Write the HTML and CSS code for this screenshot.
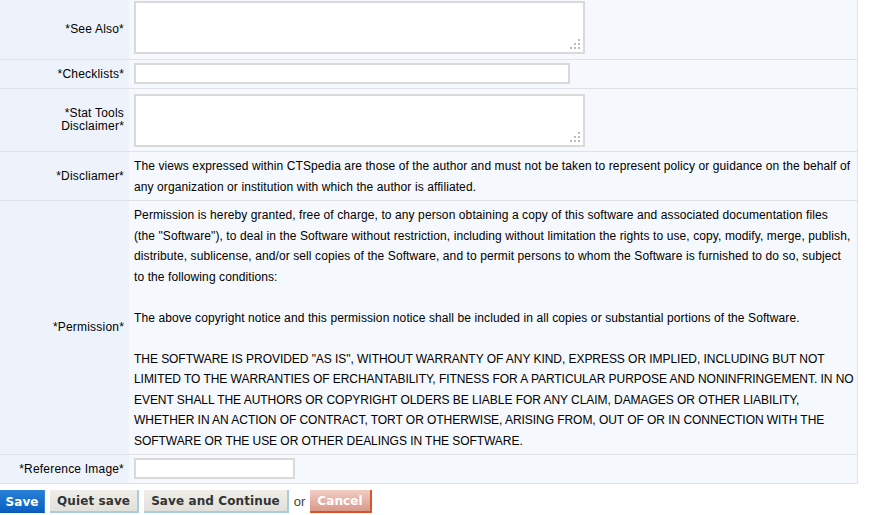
FILE: index.html
```html
<!DOCTYPE html>
<html>
<head>
<meta charset="utf-8">
<link rel="stylesheet" href="styles.css">
</head>
<body>
<table class="form">
  <tr class="row-first">
    <td class="label">*See Also*</td>
    <td class="value pad-area">
      <span class="area-wrap"><textarea class="area"></textarea><svg class="grip" width="10" height="10" viewBox="0 0 10 10"><rect x="8" y="0" width="2" height="2"/><rect x="4" y="4" width="2" height="2"/><rect x="8" y="4" width="2" height="2"/><rect x="0" y="8" width="2" height="2"/><rect x="4" y="8" width="2" height="2"/><rect x="8" y="8" width="2" height="2"/></svg></span>
    </td>
  </tr>
  <tr>
    <td class="label">*Checklists*</td>
    <td class="value pad-input"><input class="field field-wide" type="text"></td>
  </tr>
  <tr>
    <td class="label">*Stat Tools<br>Disclaimer*</td>
    <td class="value pad-area">
      <span class="area-wrap"><textarea class="area"></textarea><svg class="grip" width="10" height="10" viewBox="0 0 10 10"><rect x="8" y="0" width="2" height="2"/><rect x="4" y="4" width="2" height="2"/><rect x="8" y="4" width="2" height="2"/><rect x="0" y="8" width="2" height="2"/><rect x="4" y="8" width="2" height="2"/><rect x="8" y="8" width="2" height="2"/></svg></span>
    </td>
  </tr>
  <tr>
    <td class="label">*Discliamer*</td>
    <td class="value pad-text">The views expressed within CTSpedia are those of the author and must not be taken to represent policy or guidance on the behalf of<br>any organization or institution with which the author is affiliated.</td>
  </tr>
  <tr>
    <td class="label">*Permission*</td>
    <td class="value pad-text">Permission is hereby granted, free of charge, to any person obtaining a copy of this software and associated documentation files<br>(the "Software"), to deal in the Software without restriction, including without limitation the rights to use, copy, modify, merge, publish,<br>distribute, sublicense, and/or sell copies of the Software, and to permit persons to whom the Software is furnished to do so, subject<br>to the following conditions:<br><br>The above copyright notice and this permission notice shall be included in all copies or substantial portions of the Software.<br><br><span class="caps">THE SOFTWARE IS PROVIDED "AS IS", WITHOUT WARRANTY OF ANY KIND, EXPRESS OR IMPLIED, INCLUDING BUT NOT<br>LIMITED TO THE WARRANTIES OF ERCHANTABILITY, FITNESS FOR A PARTICULAR PURPOSE AND NONINFRINGEMENT. IN NO<br>EVENT SHALL THE AUTHORS OR COPYRIGHT OLDERS BE LIABLE FOR ANY CLAIM, DAMAGES OR OTHER LIABILITY,<br>WHETHER IN AN ACTION OF CONTRACT, TORT OR OTHERWISE, ARISING FROM, OUT OF OR IN CONNECTION WITH THE<br>SOFTWARE OR THE USE OR OTHER DEALINGS IN THE SOFTWARE.</span></td>
  </tr>
  <tr>
    <td class="label">*Reference Image*</td>
    <td class="value pad-input"><input class="field field-short" type="text"></td>
  </tr>
</table>
<div class="actions">
  <button class="btn btn-save" type="button">Save</button>
  <button class="btn btn-gray" type="button">Quiet save</button>
  <button class="btn btn-gray" type="button">Save and Continue</button>
  <span class="or">or</span>
  <button class="btn btn-cancel" type="button">Cancel</button>
</div>
</body>
</html>
```

FILE: styles.css
```css
html, body {
  margin: 0;
  padding: 0;
  background: #ffffff;
}
body {
  font-family: "Liberation Sans", Arial, sans-serif;
  font-size: 12px;
  color: #000;
}
.form {
  border-collapse: separate;
  border-spacing: 0;
  width: 858px;
  table-layout: fixed;
}
.form td {
  border-bottom: 1px solid #dfe3e8;
}
.label {
  width: 124px;
  padding: 0 5px 0 0;
  text-align: right;
  vertical-align: middle;
  background: #eef3fb;
  line-height: 13px;
  letter-spacing: 0.2px;
}
.value {
  background: #f5f8fc;
  border-right: 1px solid #dfe3e8;
  padding-left: 5px;
  padding-right: 4px;
  vertical-align: top;
}
.pad-area {
  padding-top: 5px;
  padding-bottom: 4px;
}
.row-first .pad-area {
  padding-top: 1px;
  padding-bottom: 5px;
}
.pad-input {
  padding-top: 3px;
  padding-bottom: 4px;
}
.pad-text {
  padding-top: 4px;
  padding-bottom: 3px;
  line-height: 20.5px;
  letter-spacing: 0.1px;
  white-space: nowrap;
}
.caps {
  letter-spacing: -0.05px;
}
.area-wrap {
  position: relative;
  display: block;
  width: 451px;
  height: 53px;
}
.area {
  display: block;
  box-sizing: border-box;
  width: 451px;
  height: 53px;
  margin: 0;
  padding: 2px;
  border: 2px solid #d9d9d9;
  background: #fff;
  resize: none;
  font-family: "Liberation Sans", Arial, sans-serif;
  font-size: 12px;
}
.grip {
  position: absolute;
  right: 5px;
  bottom: 5px;
  fill: #bdbdbd;
}
.field {
  display: block;
  box-sizing: border-box;
  height: 21px;
  margin: 0;
  padding: 1px 3px;
  border: 2px solid #d9d9d9;
  background: #fff;
  font-family: "Liberation Sans", Arial, sans-serif;
  font-size: 12px;
}
.field-wide {
  width: 436px;
}
.field-short {
  width: 161px;
}
.actions {
  display: flex;
  align-items: flex-start;
  gap: 5px;
  margin-top: 6px;
}
.btn {
  box-sizing: border-box;
  height: 23px;
  margin: 0;
  padding: 1px 7px 0;
  font-family: "DejaVu Sans", Verdana, sans-serif;
  font-weight: bold;
  font-size: 12px;
  letter-spacing: 0.1px;
  line-height: 20px;
  border: 0;
  border-radius: 0;
  cursor: pointer;
}
.btn-save {
  width: 45px;
  padding-left: 5px;
  padding-right: 5px;
  color: #fff;
  background: linear-gradient(#2a7fd8, #0a5ec2);
  border-right: 1px solid #3a86d0;
  border-bottom: 1px solid #0b58b0;
}
.btn-gray {
  color: #333;
  background: linear-gradient(#efeee9, #e1e0da);
  border-right: 2px solid #a9cde0;
  border-bottom: 2px solid #a9cde0;
}
.btn-cancel {
  color: #fff;
  background: linear-gradient(#f0cdc4, #d9998a);
  border-right: 2px solid #d9532b;
  border-bottom: 2px solid #d9532b;
}
.or {
  font-family: "Liberation Sans", Arial, sans-serif;
  font-size: 13px;
  line-height: 23px;
  color: #444;
}
```
